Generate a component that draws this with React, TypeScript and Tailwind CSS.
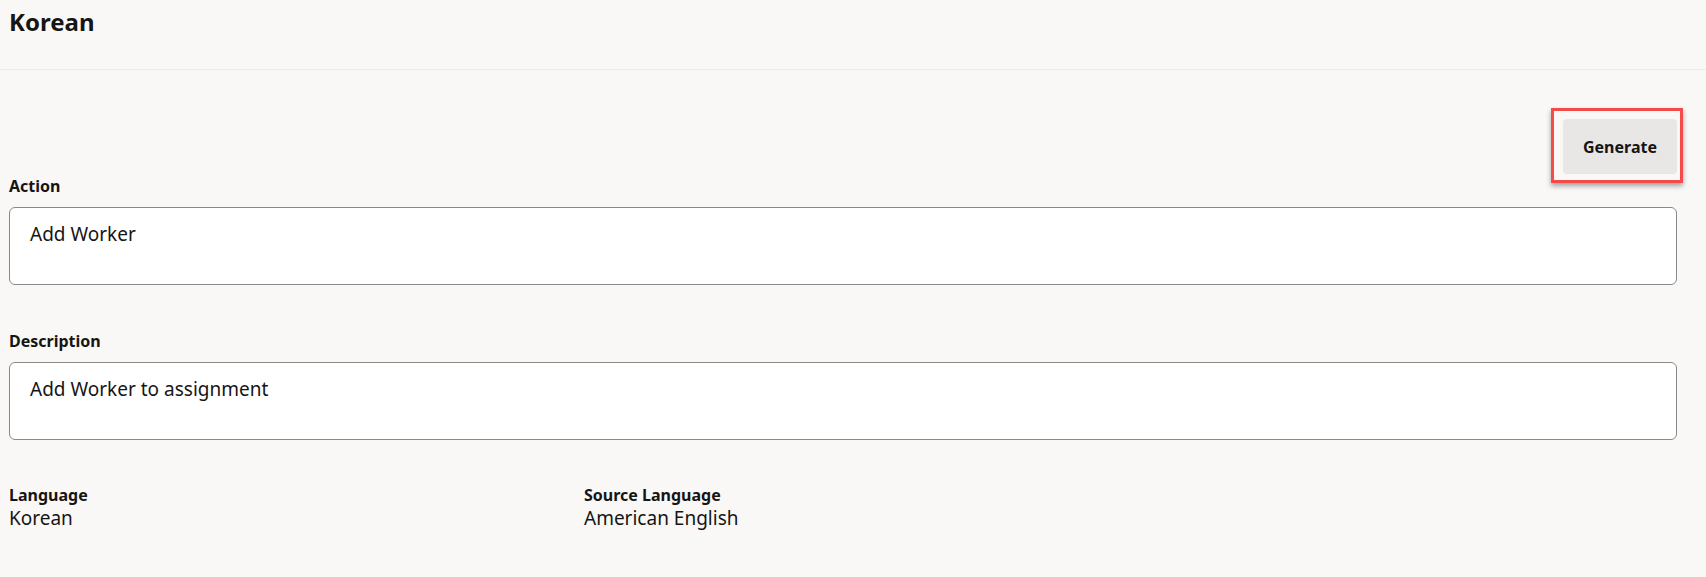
const fields = [
    { label: "Action", value: "Add Worker" },
    { label: "Description", value: "Add Worker to assignment" },
];

const details = [
    { label: "Language", value: "Korean", width: "w-[575px]" },
    { label: "Source Language", value: "American English", width: "" },
];

const App = () => {
    return (
        <div className="w-full h-[577px] bg-[#f9f8f7] text-[#161513] font-['Noto_Sans',sans-serif] overflow-hidden">
            {/* Header */}
            <div className="h-[70px] border-b border-[#eeebe8] px-[9px] pt-[6px]">
                <h1 className="text-[24px] leading-[32px] font-bold">Korean</h1>
            </div>

            <div className="pl-[9px] pr-[29px]">
                {/* Toolbar */}
                <div className="flex justify-end mt-[49px]">
                    <div className="relative">
                        <button className="w-[114px] h-[55px] rounded-[4px] bg-[#e9e7e6] text-[16px] font-bold">
                            Generate
                        </button>
                        <div className="absolute -left-[12px] -right-[6px] -top-[11px] -bottom-[9px] border-[3px] border-[#f44a4a] shadow-[0_3px_5px_rgba(0,0,0,0.35)] pointer-events-none" />
                    </div>
                </div>

                {/* Text fields */}
                {fields.map((field, index) => (
                    <div key={index} className={index === 0 ? "mt-[1px]" : "mt-[45px]"}>
                        <div className="text-[16px] leading-[22px] font-bold">{field.label}</div>
                        <div className="mt-[10px] h-[78px] bg-white border border-[#8a8988] rounded-[6px] pl-[20px] pt-[14px]">
                            <span className="text-[19px] leading-[24px]">{field.value}</span>
                        </div>
                    </div>
                ))}

                {/* Read-only details */}
                <div className="flex mt-[44px]">
                    {details.map((item, index) => (
                        <div key={index} className={item.width}>
                            <div className="text-[16px] leading-[22px] font-bold">{item.label}</div>
                            <div className="text-[19px] leading-[24px]">{item.value}</div>
                        </div>
                    ))}
                </div>
            </div>
        </div>
    );
};

export default App;
